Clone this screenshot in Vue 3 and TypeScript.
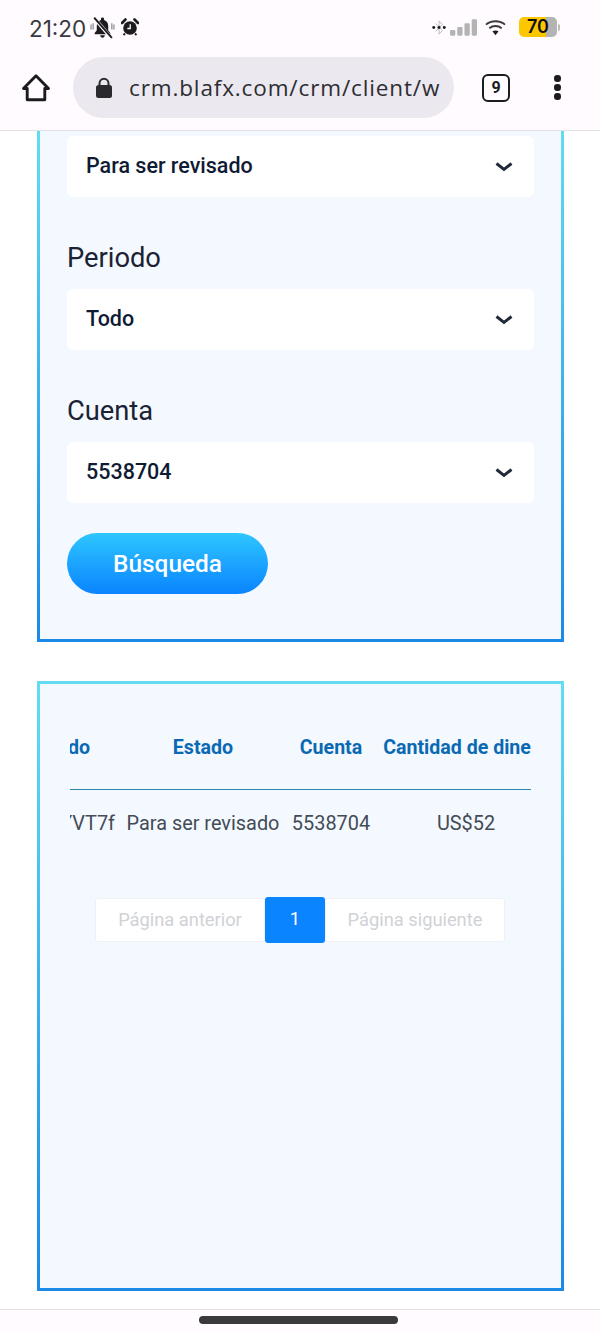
<script setup lang="ts">
interface Field {
  label?: string;
  value: string;
}

const fields: Field[] = [
  { value: 'Para ser revisado' },
  { label: 'Periodo', value: 'Todo' },
  { label: 'Cuenta', value: '5538704' },
];

const columns = ['Pedido', 'Estado', 'Cuenta', 'Cantidad de dinero'];
const row = ['YVT7f', 'Para ser revisado', '5538704', 'US$52'];
</script>

<template>
  <div class="screen">
    <header class="chrome">
      <div class="status-bar">
        <div class="status-left">
          <span class="time">21:20</span>
          <svg class="bell" viewBox="0 0 24 24" width="25" height="25">
            <path d="M12 2.500c-.9 0-1.500.6-1.500 1.500v.7C7.800 5.500 6.500 8 6.500 10.500v4.200L4.500 17.200v1.300h15v-1.300l-2-2.500v-4.200c0-2.500-1.300-5-4-5.800V4c0-.9-.6-1.500-1.500-1.500zM9.800 19.500c0 1.300 1 2.300 2.200 2.300s2.200-1 2.200-2.300z" fill="#1c1b1f" />
            <path d="M4.500 3.500l15.500 18" stroke="#fffbfe" stroke-width="3.400" />
            <path d="M4 2.500l17 19.500" stroke="#1c1b1f" stroke-width="1.900" />
            <path d="M1 9v5M3 8v6M21 8v6M23 9v5" stroke="#777" stroke-width="1" />
          </svg>
          <svg class="alarm" viewBox="0 0 18 18" width="18" height="18">
            <circle cx="9" cy="10" r="6.800" fill="#1c1b1f" />
            <path d="M1 5l3.500-3.500M17 5l-3.500-3.500" stroke="#1c1b1f" stroke-width="2.600" stroke-linecap="round" />
            <path d="M4 15.500l-1.500 1.500M14 15.500l1.500 1.500" stroke="#1c1b1f" stroke-width="1.800" />
            <path d="M9.200 6.200v4.300H6.300" stroke="#fffbfe" stroke-width="1.300" fill="none" />
          </svg>
        </div>
        <div class="status-right">
          <svg class="bluetooth" viewBox="0 0 16 18" width="14" height="17">
            <path d="M4 4.500l8 8-4 4v-15l4 4-8 8" stroke="#b8b8b8" stroke-width="1.100" fill="none" />
            <circle cx="2" cy="9" r="1.700" fill="#1c1b1f" />
            <circle cx="8" cy="9" r="1.700" fill="#1c1b1f" />
            <circle cx="14" cy="9" r="1.700" fill="#1c1b1f" />
          </svg>
          <svg class="signal" viewBox="0 0 28 17" width="27" height="17">
            <rect x="0" y="11" width="5.500" height="6" rx="1.200" fill="#b4b4b4" />
            <rect x="7.500" y="8" width="5.500" height="9" rx="1.200" fill="#b4b4b4" />
            <rect x="15" y="4" width="5.500" height="13" rx="1.200" fill="#b4b4b4" />
            <rect x="22.500" y="0" width="5.500" height="17" rx="1.200" fill="#b4b4b4" />
          </svg>
          <svg class="wifi" viewBox="0 0 22 17" width="21" height="17">
            <path d="M1 5.500C6.500.800 15.500.800 21 5.500" stroke="#3a3a3c" stroke-width="2" fill="none" />
            <path d="M4.500 9.200c3.800-3 9.200-3 13 0" stroke="#3a3a3c" stroke-width="2" fill="none" />
            <path d="M7.800 12.500c2-1.300 4.400-1.300 6.400 0L11 16.500z" fill="#1c1b1f" />
          </svg>
          <div class="battery">
            <div class="battery-body"><span>70</span></div>
            <i class="battery-tip"></i>
          </div>
        </div>
      </div>

      <div class="toolbar">
        <svg class="home" viewBox="0 0 30 30" width="30" height="30">
          <path d="M2.500 15.500L15 2.800l12.500 12.700h-3.700v11.200H6.200V15.500z" fill="none" stroke="#1c1b1f" stroke-width="2.900" stroke-linejoin="round" />
        </svg>
        <div class="url-bar">
          <svg class="lock" viewBox="0 0 18 22" width="18" height="22">
            <path d="M4.500 9V6.300a4.500 4.500 0 0 1 9 0V9" fill="none" stroke="#2a2a2e" stroke-width="2" />
            <rect x="1" y="8" width="16" height="13" rx="2.500" fill="#2a2a2e" />
          </svg>
          <span class="url">crm.blafx.com/crm/client/w</span>
        </div>
        <div class="tabs">9</div>
        <div class="menu"><i></i><i></i><i></i></div>
      </div>
    </header>

    <main class="page">
      <section class="card filter-card">
        <div v-for="field in fields" :key="field.value" class="field">
          <label v-if="field.label" class="field-label">{{ field.label }}</label>
          <div class="select">
            <span>{{ field.value }}</span>
            <svg viewBox="0 0 18 12" width="18" height="12">
              <path d="M1.500 2.500L9 8.500l7.500-6" fill="none" stroke="#1f2937" stroke-width="2.900" />
            </svg>
          </div>
        </div>
        <button class="search-btn">Búsqueda</button>
      </section>

      <section class="card table-card">
        <div class="table-scroll">
          <div class="table-row table-head">
            <div v-for="col in columns" :key="col" class="cell">{{ col }}</div>
          </div>
          <div class="table-row table-body">
            <div v-for="val in row" :key="val" class="cell">{{ val }}</div>
          </div>
        </div>
        <div class="pagination">
          <span class="page-btn prev">Página anterior</span>
          <span class="page-btn current">1</span>
          <span class="page-btn next">Página siguiente</span>
        </div>
      </section>
    </main>

    <footer class="nav-bar"><i></i></footer>
  </div>
</template>

<style>
html,
body {
  margin: 0;
  background: #fff;
}
</style>

<style scoped>
.screen {
  width: 600px;
  height: 1333px;
  display: flex;
  flex-direction: column;
  overflow: hidden;
  font-family: Roboto, "Liberation Sans", sans-serif;
  background: #fff;
}

.chrome {
  height: 131px;
  box-sizing: border-box;
  flex-shrink: 0;
  background: #fffbfe;
  border-bottom: 1px solid #e2e0e5;
}

.status-bar {
  height: 56px;
  box-sizing: border-box;
  padding: 15px 40px 0 29px;
  display: flex;
  justify-content: space-between;
  align-items: flex-start;
}

.status-left {
  display: flex;
  align-items: center;
  height: 24px;
}

.time {
  font-family: Inter, sans-serif;
  font-size: 22.500px;
  color: #3a3a3e;
  margin-right: 4px;
  padding-top: 2px;
}

.alarm {
  margin-left: 6px;
}

.status-right {
  display: flex;
  align-items: center;
  height: 24px;
}

.signal {
  margin-left: 4px;
}

.wifi {
  margin-left: 8px;
}

.battery {
  margin-left: 13px;
  display: flex;
  align-items: center;
}

.battery-body {
  width: 38px;
  height: 20px;
  border-radius: 5px;
  background: linear-gradient(90deg, #fcc700 0 72%, #b4b4b4 72%);
  font-family: Inter, sans-serif;
  font-size: 18px;
  font-weight: 600;
  color: #111;
  line-height: 20px;
  text-align: center;
}

.battery-tip {
  width: 2px;
  height: 7px;
  margin-left: 1px;
  background: #bbb;
  border-radius: 0 2px 2px 0;
}

.toolbar {
  height: 61px;
  margin-top: 1px;
  display: flex;
  align-items: center;
  padding-left: 21px;
}

.url-bar {
  width: 381px;
  height: 61px;
  box-sizing: border-box;
  margin-left: 22px;
  padding-left: 22px;
  border-radius: 31px;
  background: #ebe8ef;
  display: flex;
  align-items: center;
  overflow: hidden;
}

.url {
  margin-left: 16px;
  font-family: "Open Sans", sans-serif;
  font-size: 22.500px;
  letter-spacing: 0.870px;
  color: #2d2d33;
  white-space: nowrap;
}

.tabs {
  width: 28px;
  height: 28px;
  box-sizing: border-box;
  margin-left: 28px;
  border: 2.500px solid #1c1b1f;
  border-radius: 6px;
  font-size: 16px;
  font-weight: 700;
  line-height: 23px;
  text-align: center;
  color: #1c1b1f;
}

.menu {
  margin-left: 44px;
  display: flex;
  flex-direction: column;
  gap: 2.500px;
}

.menu i {
  width: 6.500px;
  height: 6.500px;
  border-radius: 50%;
  background: #1c1b1f;
}

.page {
  flex: 1;
  min-height: 0;
  padding: 0 36px 0 37px;
}

.card {
  box-sizing: border-box;
  width: 527px;
  background: #f3f9ff;
  border: 3px solid;
  border-image: linear-gradient(180deg, #62dcf2, #1a8ae6) 1;
}

.filter-card {
  height: 511px;
  padding: 5px 27px 0;
  border-top: 0;
}

.field + .field {
  margin-top: 25px;
}

.field-label {
  display: block;
  box-sizing: border-box;
  height: 67px;
  padding-top: 6px;
  font-size: 27.300px;
  line-height: 61px;
  color: #1a2233;
}

.select {
  height: 61px;
  padding: 0 21px 0 19px;
  border-radius: 6px;
  background: #fff;
  display: flex;
  align-items: center;
  justify-content: space-between;
  font-size: 21.500px;
  font-weight: 500;
  color: #0f1b33;
}

.select span {
  margin-top: -3px;
}

.search-btn {
  display: block;
  width: 201px;
  height: 61px;
  margin-top: 30px;
  padding: 0;
  border: 0;
  border-radius: 31px;
  background: linear-gradient(180deg, #2ec6ff, #0a84ff);
  font-family: inherit;
  font-size: 24.400px;
  font-weight: 500;
  color: #fff;
}

.table-card {
  height: 610px;
  margin-top: 39px;
  padding: 0 30px;
}

.table-scroll {
  overflow: hidden;
  padding-top: 40px;
}

.table-row {
  display: grid;
  grid-template-columns: 49px 168px 88px 182px;
  width: 487px;
}

.cell {
  display: flex;
  justify-content: center;
  white-space: nowrap;
}

.cell:first-child {
  justify-content: flex-end;
}

.table-head {
  width: 461px;
  height: 65px;
  border-bottom: 1px solid #2f86ad;
  box-sizing: content-box;
  font-size: 19.600px;
  font-weight: 700;
  line-height: 48px;
  color: #0b69b3;
}

.table-head .cell:first-child {
  padding-right: 29px;
}

.table-body {
  font-size: 19.900px;
  line-height: 68px;
  color: #444b55;
}

.table-body .cell:first-child {
  padding-right: 4px;
}

.pagination {
  margin-top: 39px;
  padding-right: 1px;
  display: flex;
  align-items: center;
  justify-content: center;
}

.page-btn {
  height: 44px;
  box-sizing: border-box;
  background: #fff;
  border: 1px solid #eef1f5;
  font-size: 18.300px;
  line-height: 42px;
  text-align: center;
  color: #cfd2d6;
}

.prev {
  width: 170px;
  border-radius: 2px 0 0 2px;
}

.next {
  width: 180px;
  border-radius: 0 2px 2px 0;
}

.current {
  width: 60px;
  height: 46px;
  line-height: 44px;
  border: 0;
  border-radius: 3px;
  background: #0a84ff;
  color: #fff;
}

.nav-bar {
  height: 24px;
  flex-shrink: 0;
  background: #fffbfe;
  border-top: 1px solid #e2e0e5;
  display: flex;
  justify-content: center;
  padding: 6px 3px 0 0;
  box-sizing: border-box;
}

.nav-bar i {
  width: 199px;
  height: 8px;
  border-radius: 4px;
  background: #3a3a3c;
}
</style>
